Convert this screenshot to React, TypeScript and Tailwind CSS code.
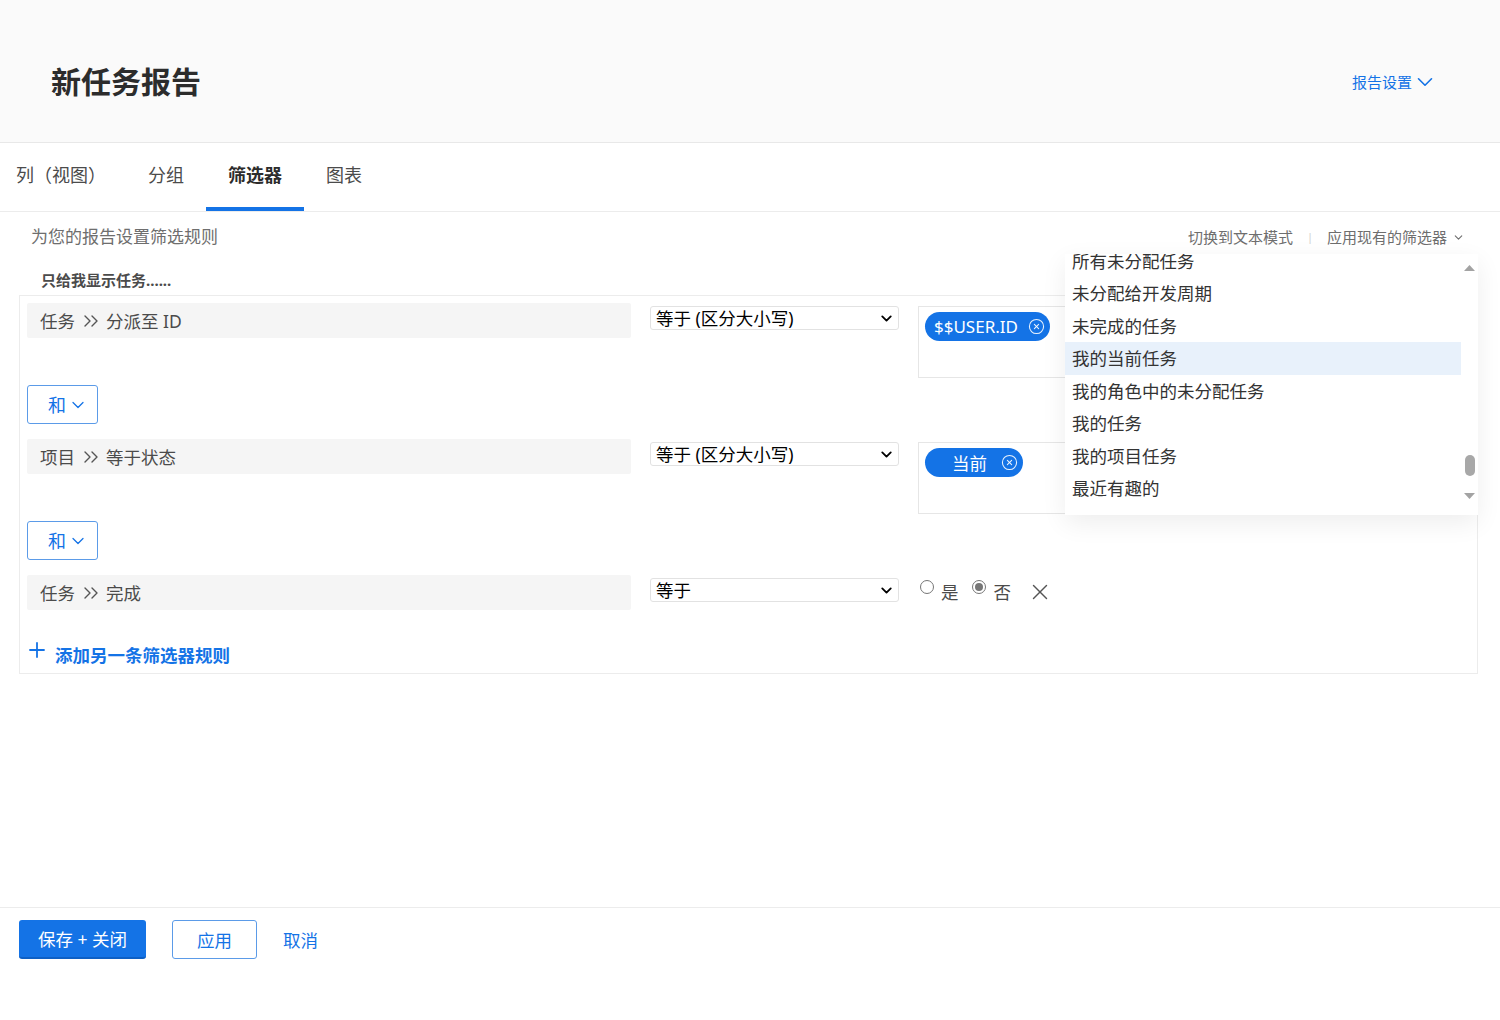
import React from 'react';
import { ChevronDown, ChevronsRight, X, CircleX, Plus } from 'lucide-react';

const listItems = [
  '所有未分配任务',
  '未分配给开发周期',
  '未完成的任务',
  '我的当前任务',
  '我的角色中的未分配任务',
  '我的任务',
  '我的项目任务',
  '最近有趣的',
];

const Field: React.FC<{ obj: string; name: string }> = ({ obj, name }) => (
  <div className="w-[604px] h-[35px] shrink-0 bg-[#f5f5f5] rounded-[2px] flex items-center pl-[13px] text-[17.5px] leading-[24px] text-[#4b4b4b]">
    <span>{obj}</span>
    <ChevronsRight size={24} strokeWidth={1.4} className="ml-[4px] mr-[3px] text-[#555]" />
    <span>{name}</span>
  </div>
);

const OpSelect: React.FC<{ label: string }> = ({ label }) => (
  <div className="ml-[19px] mt-[3px] w-[249px] h-[24px] shrink-0 border border-[#e2e2e2] rounded-[3px] bg-white flex items-center justify-between pl-[5px] pr-[3px] text-[17.5px] leading-[22px] text-black">
    <span>{label}</span>
    <ChevronDown size={17} strokeWidth={2.6} className="text-black" />
  </div>
);

const AndButton = () => (
  <div className="mt-[7px] w-[71px] h-[39px] border-[1.5px] border-[#5b9be8] rounded-[3px] flex items-center pl-[20px] text-[#1473e6]">
    <span className="text-[18px] leading-[24px]">和</span>
    <ChevronDown size={20} strokeWidth={1.5} className="ml-[2px] mt-[1px]" />
  </div>
);

export default function App() {
  return (
    <div className="min-h-screen flex flex-col bg-white font-['Noto_Sans','Noto_Sans_CJK_SC',sans-serif]">
      {/* Header */}
      <header className="h-[143px] shrink-0 bg-[#fafafa] border-b border-[#e8e8e8] flex items-start justify-between pl-[51px] pr-[62px] pt-[62px]">
        <h1 className="text-[30px] leading-[40px] font-bold text-[#2c2c2c]">新任务报告</h1>
        <button className="flex items-center h-[40px] text-[15px] text-[#1473e6]">
          报告设置
          <ChevronDown size={26} strokeWidth={1.5} />
        </button>
      </header>

      {/* Tabs */}
      <nav className="h-[69px] shrink-0 border-b border-[#ececec] flex text-[18px] leading-[24px] text-[#4b4b4b]">
        <div className="pl-[16px] pr-[20px] pt-[20px]">列（视图）</div>
        <div className="px-[22px] pt-[20px]">分组</div>
        <div className="relative px-[22px] pt-[20px] font-bold text-[#2c2c2c]">
          筛选器
          <div className="absolute left-0 right-0 bottom-0 h-[4px] bg-[#1473e6]" />
        </div>
        <div className="px-[22px] pt-[20px]">图表</div>
      </nav>

      {/* Main */}
      <main className="relative flex-1">
        <div className="h-[50px] flex items-center justify-between pl-[31px] pr-[35px]">
          <span className="text-[17px] leading-[24px] text-[#6e6e6e]">为您的报告设置筛选规则</span>
          <div className="flex items-center text-[15px] leading-[22px] text-[#6e6e6e]">
            <span>切换到文本模式</span>
            <span className="mx-[14px] text-[11px] text-[#cfcfcf]">|</span>
            <span>应用现有的筛选器</span>
            <ChevronDown size={13} strokeWidth={2} className="ml-[5px]" />
          </div>
        </div>

        <div className="mt-[6px] pl-[41px] text-[15px] leading-[24px] font-bold text-[#4b4b4b]">只给我显示任务......</div>

        <div className="mt-[3px] ml-[19px] mr-[22px] border border-[#ececec] pl-[7px] pt-[7px] pb-[6px]">
          {/* Rule 1 */}
          <div className="flex items-start">
            <Field obj="任务" name="分派至 ID" />
            <OpSelect label="等于 (区分大小写)" />
            <div className="ml-[19px] mt-[3px] w-[300px] h-[72px] border border-[#e6e6e6] bg-white pt-[5px] pl-[6px]">
              <span className="inline-flex items-center h-[29px] rounded-full bg-[#1473e6] text-white pl-[9px] pr-[5px]">
                <span className="text-[17px] leading-[22px]">$$USER.ID</span>
                <CircleX size={17} strokeWidth={1.5} className="ml-[10px] text-white/90" />
              </span>
            </div>
          </div>
          <AndButton />

          {/* Rule 2 */}
          <div className="mt-[15px] flex items-start">
            <Field obj="项目" name="等于状态" />
            <OpSelect label="等于 (区分大小写)" />
            <div className="ml-[19px] mt-[3px] w-[300px] h-[72px] border border-[#e6e6e6] bg-white pt-[5px] pl-[6px]">
              <span className="inline-flex items-center h-[29px] rounded-full bg-[#1473e6] text-white pl-[27px] pr-[5px]">
                <span className="text-[17.5px] leading-[22px]">当前</span>
                <CircleX size={17} strokeWidth={1.5} className="ml-[14px] text-white/90" />
              </span>
            </div>
          </div>
          <AndButton />

          {/* Rule 3 */}
          <div className="mt-[15px] flex items-start">
            <Field obj="任务" name="完成" />
            <OpSelect label="等于" />
            <div className="ml-[21px] flex items-start text-[17.5px] leading-[22px] text-[#4b4b4b]">
              <span className="mt-[5px] w-[14px] h-[14px] rounded-full border border-[#767676] bg-white" />
              <span className="ml-[7px] mt-[6px]">是</span>
              <span className="ml-[13px] mt-[5px] w-[14px] h-[14px] rounded-full border border-[#767676] bg-white flex items-center justify-center">
                <span className="w-[8px] h-[8px] rounded-full bg-[#767676]" />
              </span>
              <span className="ml-[8px] mt-[6px]">否</span>
              <X size={26} strokeWidth={1.3} className="ml-[16px] mt-[4px] text-[#555]" />
            </div>
          </div>

          <div className="mt-[28px] flex items-start text-[#1473e6]">
            <Plus size={24} strokeWidth={1.8} className="ml-[-2px]" />
            <span className="ml-[6px] mt-[5px] text-[17.5px] leading-[24px] font-bold">添加另一条筛选器规则</span>
          </div>
        </div>

        {/* Existing filter dropdown (overlay) */}
        <div className="absolute left-[1065px] top-[42px] w-[413px] h-[261px] bg-white shadow-[0_8px_24px_rgba(0,0,0,0.07)] flex overflow-hidden">
          <ul className="w-[396px] mt-[-9.5px]">
            {listItems.map((item) => (
              <li
                key={item}
                className={
                  item === '我的当前任务'
                    ? 'h-[32.5px] flex items-center px-[7px] text-[17.5px] text-[#333] bg-[#e8f1fb]'
                    : 'h-[32.5px] flex items-center px-[7px] text-[17.5px] text-[#333]'
                }
              >
                {item}
              </li>
            ))}
          </ul>
          <div className="w-[17px] flex flex-col items-center">
            <svg width="11" height="6" viewBox="0 0 11 6" className="mt-[11px]">
              <polygon points="5.5,0 11,6 0,6" fill="#a3a3a3" />
            </svg>
            <div className="mt-[184px] w-[10px] h-[21px] rounded-full bg-[#a8a8a8]" />
            <svg width="11" height="6" viewBox="0 0 11 6" className="mt-[17px]">
              <polygon points="0,0 11,0 5.5,6" fill="#a3a3a3" />
            </svg>
          </div>
        </div>
      </main>

      {/* Footer */}
      <footer className="h-[113px] shrink-0 border-t border-[#ececec] pl-[19px] pt-[12px] flex items-start">
        <button className="w-[127px] h-[39px] rounded-[3px] bg-[#1473e6] border-b-2 border-[#0d5fc4] text-white text-[17.5px] leading-[24px]">
          保存 + 关闭
        </button>
        <button className="ml-[26px] w-[85px] h-[39px] rounded-[3px] border-[1.5px] border-[#5b9be8] bg-white text-[#1473e6] text-[17.5px] leading-[24px]">
          应用
        </button>
        <button className="ml-[26px] h-[39px] text-[#1473e6] text-[17.5px] leading-[24px]">取消</button>
      </footer>
    </div>
  );
}
